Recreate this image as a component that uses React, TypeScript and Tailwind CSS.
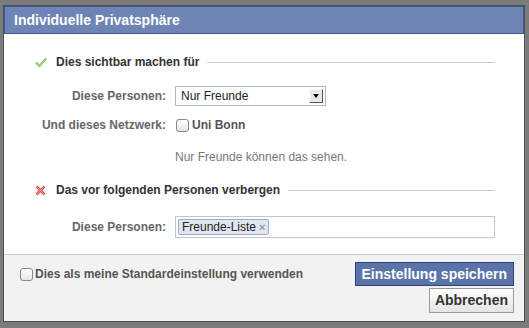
import React from 'react';

const font = { fontFamily: '"Liberation Sans", Arial, sans-serif' };

function CheckIcon() {
  return (
    <svg width="12" height="10" viewBox="0 0 12 10">
      <path d="M1 5.5 L4.5 9 L11 1.5" fill="none" stroke="#7dbb5b" strokeWidth="2.2" />
      <path d="M1 5.5 L4.5 9 L11 1.5" fill="none" stroke="#c9e8b3" strokeWidth="0.8" />
    </svg>
  );
}

function CrossIcon() {
  return (
    <svg width="11" height="11" viewBox="0 0 11 11">
      <path d="M1.5 1.5 L9.5 9.5 M9.5 1.5 L1.5 9.5" stroke="#d9534f" strokeWidth="2.6" />
      <path d="M1.5 1.5 L9.5 9.5 M9.5 1.5 L1.5 9.5" stroke="#f4b4b2" strokeWidth="0.8" />
    </svg>
  );
}

function SectionTitle({ icon, children }: { icon: React.ReactNode; children: React.ReactNode }) {
  return (
    <div className="flex items-center">
      <div className="w-[21px] flex justify-start">{icon}</div>
      <span className="text-[12px] font-bold text-[#333] pr-2 whitespace-nowrap">{children}</span>
      <div className="flex-1 h-px bg-[#ccc]" />
    </div>
  );
}

function Checkbox() {
  return <div className="w-[13px] h-[13px] rounded-[3px] border border-[#888] bg-gradient-to-b from-white to-[#e6e6e6]" />;
}

export default function App() {
  return (
    <div className="w-[529px] h-[328px] bg-[#7b7b7b] relative overflow-hidden" style={font}>
      <div className="absolute left-[3px] top-[5px] w-[522px] h-[317px] border border-[#4f4f4f] bg-white flex flex-col">
        <div className="h-[28px] shrink-0 bg-[#6d84b4] border border-[#3b5998] flex items-center pl-[9px]">
          <span className="text-[14px] font-bold text-white">Individuelle Privatsphäre</span>
        </div>
        <div className="flex-1 min-h-0 pl-[31px] pr-[29px] pt-[19px]">
          <SectionTitle icon={<CheckIcon />}>Dies sichtbar machen für</SectionTitle>
          <div className="mt-[15px] flex items-center">
            <div className="w-[131px] text-right text-[12px] font-bold text-[#666] whitespace-nowrap">Diese Personen:</div>
            <div className="ml-[9px] w-[151px] h-[20px] border border-[#aab6cf] flex items-center justify-between pl-[5px] pr-[2px]">
              <span className="text-[12px] text-[#222]">Nur Freunde</span>
              <div className="w-[14px] h-[14px] bg-[#e8e8e8] border-r border-b border-[#555] border-l border-t border-l-white border-t-white flex items-center justify-center">
                <div className="w-0 h-0 border-l-[3px] border-r-[3px] border-t-[4px] border-l-transparent border-r-transparent border-t-black" />
              </div>
            </div>
          </div>
          <div className="mt-[10px] flex items-center">
            <div className="w-[131px] text-right text-[12px] font-bold text-[#666] whitespace-nowrap">Und dieses Netzwerk:</div>
            <div className="ml-[10px] flex items-center gap-[3px]">
              <Checkbox />
              <span className="text-[12px] font-bold text-[#555]">Uni Bonn</span>
            </div>
          </div>
          <div className="mt-[14px] ml-[140px] text-[12px] text-[#777]">Nur Freunde können das sehen.</div>
          <div className="mt-[15px]">
            <SectionTitle icon={<CrossIcon />}>Das vor folgenden Personen verbergen</SectionTitle>
          </div>
          <div className="mt-[17px] flex items-center">
            <div className="w-[131px] text-right text-[12px] font-bold text-[#666] whitespace-nowrap">Diese Personen:</div>
            <div className="ml-[9px] flex-1 h-[22px] border border-[#bdc7d8] flex items-center pl-[2px]">
              <div className="h-[16px] px-[3px] bg-[#e2e6f0] border border-[#9dacc7] rounded-[2px] flex items-center gap-[3px]">
                <span className="text-[12px] text-[#222]">Freunde-Liste</span>
                <span className="text-[11px] text-[#8c9bb8] font-bold">×</span>
              </div>
            </div>
          </div>
        </div>
        <div className="h-[67px] shrink-0 bg-[#f2f2f2] border-t border-[#ccc] flex justify-between pl-[16px] pr-[10px] pt-[7px]">
          <div className="flex items-center gap-[2px] h-[24px]">
            <Checkbox />
            <span className="text-[12px] font-bold text-[#555]">Dies als meine Standardeinstellung verwenden</span>
          </div>
          <div className="flex flex-col items-end gap-[2px]">
            <button className="h-[24px] px-[6px] bg-[#5b74a8] border border-[#29447e] text-white text-[14px] font-bold">Einstellung speichern</button>
            <button className="h-[25px] px-[5px] bg-gradient-to-b from-white to-[#e4e4e4] border border-[#999] text-[#333] text-[14px] font-bold">Abbrechen</button>
          </div>
        </div>
      </div>
    </div>
  );
}
